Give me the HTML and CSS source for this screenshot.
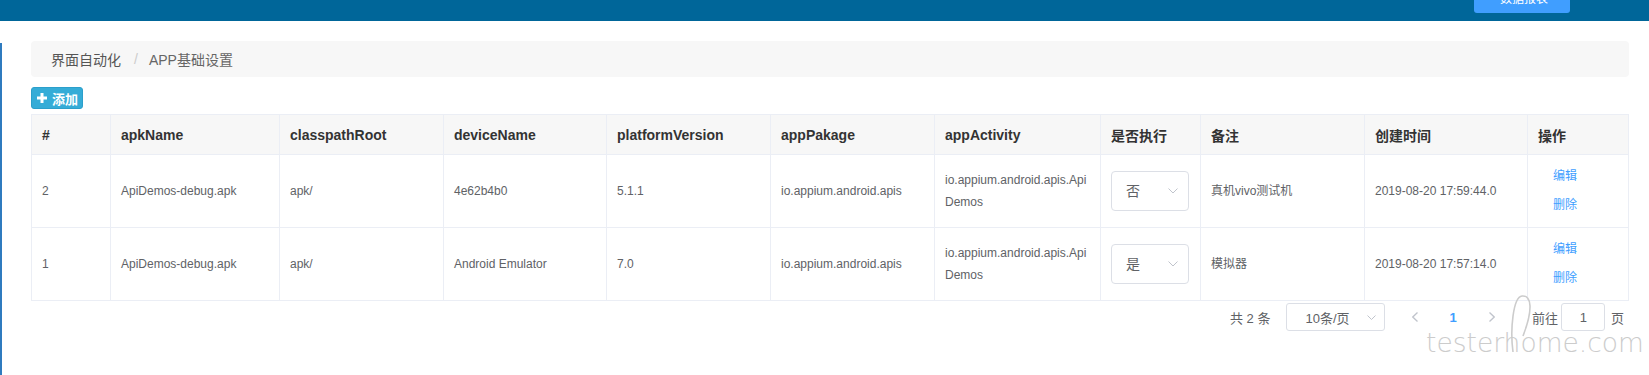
FILE: index.html
```html
<!DOCTYPE html>
<html lang="zh-CN">
<head>
<meta charset="utf-8">
<title>APP基础设置</title>
<link rel="stylesheet" href="styles.css">
</head>
<body>
<header class="topbar">
  <button class="top-btn">数据报表</button>
</header>
<div class="main">
  <div class="rail"></div>
  <div class="content">
    <nav class="breadcrumb">
      <span class="crumb">界面自动化</span>
      <span class="sep">/</span>
      <span class="crumb active">APP基础设置</span>
    </nav>
    <div class="toolbar">
      <button class="btn-add">
        <svg class="plus" width="10" height="10" viewBox="0 0 10 10"><rect x="3.5" y="0" width="3" height="10" fill="#fff"/><rect x="0" y="3.5" width="10" height="3" fill="#fff"/></svg>
        <span>添加</span>
      </button>
    </div>
    <div class="table">
      <div class="tr th">
        <div class="cell">#</div>
        <div class="cell">apkName</div>
        <div class="cell">classpathRoot</div>
        <div class="cell">deviceName</div>
        <div class="cell">platformVersion</div>
        <div class="cell">appPakage</div>
        <div class="cell">appActivity</div>
        <div class="cell">是否执行</div>
        <div class="cell">备注</div>
        <div class="cell">创建时间</div>
        <div class="cell">操作</div>
      </div>
      <div class="tr td">
        <div class="cell">2</div>
        <div class="cell">ApiDemos-debug.apk</div>
        <div class="cell">apk/</div>
        <div class="cell">4e62b4b0</div>
        <div class="cell">5.1.1</div>
        <div class="cell">io.appium.android.apis</div>
        <div class="cell">io.appium.android.apis.Api<br>Demos</div>
        <div class="cell"><div class="select"><span>否</span><svg width="10" height="6" viewBox="0 0 10 6"><polyline points="0.5,0.5 5,5 9.5,0.5" fill="none" stroke="#c0c4cc" stroke-width="1"/></svg></div></div>
        <div class="cell">真机vivo测试机</div>
        <div class="cell">2019-08-20 17:59:44.0</div>
        <div class="cell ops"><a class="link">编辑</a><a class="link">删除</a></div>
      </div>
      <div class="tr td">
        <div class="cell">1</div>
        <div class="cell">ApiDemos-debug.apk</div>
        <div class="cell">apk/</div>
        <div class="cell">Android Emulator</div>
        <div class="cell">7.0</div>
        <div class="cell">io.appium.android.apis</div>
        <div class="cell">io.appium.android.apis.Api<br>Demos</div>
        <div class="cell"><div class="select"><span>是</span><svg width="10" height="6" viewBox="0 0 10 6"><polyline points="0.5,0.5 5,5 9.5,0.5" fill="none" stroke="#c0c4cc" stroke-width="1"/></svg></div></div>
        <div class="cell">模拟器</div>
        <div class="cell">2019-08-20 17:57:14.0</div>
        <div class="cell ops"><a class="link">编辑</a><a class="link">删除</a></div>
      </div>
    </div>
    <div class="pagination">
      <span class="total">共 2 条</span>
      <div class="sizes"><span>10条/页</span><svg width="9" height="5" viewBox="0 0 9 5"><polyline points="0.5,0.5 4.5,4.5 8.5,0.5" fill="none" stroke="#c0c4cc" stroke-width="1"/></svg></div>
      <span class="pbtn"><svg width="6" height="10" viewBox="0 0 6 10"><polyline points="5.5,0.5 0.8,5 5.5,9.5" fill="none" stroke="#c0c4cc" stroke-width="1.3"/></svg></span>
      <span class="pbtn current">1</span>
      <span class="pbtn"><svg width="6" height="10" viewBox="0 0 6 10"><polyline points="0.5,0.5 5.2,5 0.5,9.5" fill="none" stroke="#c0c4cc" stroke-width="1.3"/></svg></span>
      <span class="jump">前往</span>
      <span class="jump-input">1</span>
      <span class="jump-end">页</span>
    </div>
  </div>
  <div class="watermark">testerhome.com</div>
  <svg class="wm-loop" width="36" height="62" viewBox="0 0 36 62"><path d="M8 58 C5 36 8 3 17 2 C27 1 28 16 18 42" fill="none" stroke="#cccccc" stroke-width="1.6"/></svg>
</div>
</body>
</html>
```
FILE: styles.css
```css
* { box-sizing: border-box; }
body {
  margin: 0;
  font-family: "Liberation Sans", "Noto Sans CJK SC", sans-serif;
  color: #606266;
  background: #fff;
  overflow: hidden;
}
.topbar {
  height: 21px;
  background: #006699;
  display: flex;
  justify-content: flex-end;
  align-items: flex-start;
  padding-right: 79px;
}
.top-btn {
  margin-top: -19px;
  height: 32px;
  width: 96px;
  border: 0;
  border-radius: 3px;
  background: #409eff;
  color: #fff;
  font: 12px "Liberation Sans", "Noto Sans CJK SC", sans-serif;
  padding: 0 0 0 4px;
}
.main {
  display: flex;
  min-height: 354px;
  position: relative;
}
.rail {
  width: 2px;
  flex: none;
  background: #2f7bbf;
  margin-top: 22px;
}
.content {
  flex: 1;
  min-width: 0;
  padding: 20px 20px 0 29px;
}
.breadcrumb {
  height: 36px;
  background: #f7f7f7;
  border-radius: 4px;
  display: flex;
  align-items: center;
  padding-left: 20px;
  font-size: 14px;
  color: #555;
}
.sep { color: #ccc; margin: 0 11px 0 13px; }
.crumb.active { color: #666; }
.toolbar { margin-top: 10px; display: flex; }
.btn-add {
  width: 52px;
  height: 22px;
  display: flex;
  align-items: center;
  gap: 5px;
  padding: 0 0 0 5px;
  background: #35acd7;
  border: 1px solid #2b9fcb;
  border-radius: 3px;
  color: #fff;
  font: bold 13px "Liberation Sans", "Noto Sans CJK SC", sans-serif;
}
.plus { flex: none; }
.table {
  margin-top: 5px;
  border-top: 1px solid #ebeef5;
  border-left: 1px solid #ebeef5;
}
.tr {
  display: grid;
  grid-template-columns: 79px 169px 164px 163px 164px 164px 166px 100px 164px 163px 101px;
}
.cell {
  border-right: 1px solid #ebeef5;
  border-bottom: 1px solid #ebeef5;
  padding: 0 10px;
  display: flex;
  align-items: center;
}
.th .cell {
  height: 40px;
  background: #f7f7f7;
  font-weight: bold;
  font-size: 14px;
  color: #333;
}
.td .cell {
  height: 73px;
  font-size: 12px;
  line-height: 22px;
}
.select {
  width: 78px;
  height: 40px;
  border: 1px solid #dcdfe6;
  border-radius: 4px;
  display: flex;
  align-items: center;
  justify-content: space-between;
  padding: 0 10px 0 14px;
  font-size: 14px;
  color: #606266;
}
.ops {
  flex-direction: column;
  align-items: flex-start;
  justify-content: center;
}
.link {
  display: block;
  height: 29px;
  line-height: 29px;
  padding: 0 15px;
  color: #409eff;
  font-size: 12px;
}
.pagination {
  margin-top: 2px;
  height: 28px;
  display: flex;
  align-items: center;
  justify-content: flex-end;
  padding-right: 5px;
  font-size: 13px;
  color: #606266;
}
.total { margin-right: 16px; }
.sizes {
  width: 99px;
  height: 28px;
  border: 1px solid #dcdfe6;
  border-radius: 3px;
  display: flex;
  align-items: center;
  justify-content: space-between;
  padding: 0 8px 0 18px;
  margin-right: 10px;
}
.pbtn {
  width: 38.5px;
  height: 28px;
  display: flex;
  align-items: center;
  justify-content: center;
}
.pbtn.current { color: #409eff; font-weight: bold; }
.jump { margin-left: 21px; margin-right: 3.5px; }
.jump-input {
  width: 44px;
  height: 28px;
  border: 1px solid #dcdfe6;
  border-radius: 3px;
  display: flex;
  align-items: center;
  justify-content: center;
  margin-right: 5.5px;
}
.watermark {
  position: absolute;
  left: 1426px;
  top: 309px;
  font-family: "DejaVu Sans", sans-serif;
  font-weight: 200;
  font-size: 26.5px;
  line-height: 1;
  color: #cccccc;
  white-space: nowrap;
}
.wm-loop {
  position: absolute;
  left: 1505px;
  top: 273px;
}
```
